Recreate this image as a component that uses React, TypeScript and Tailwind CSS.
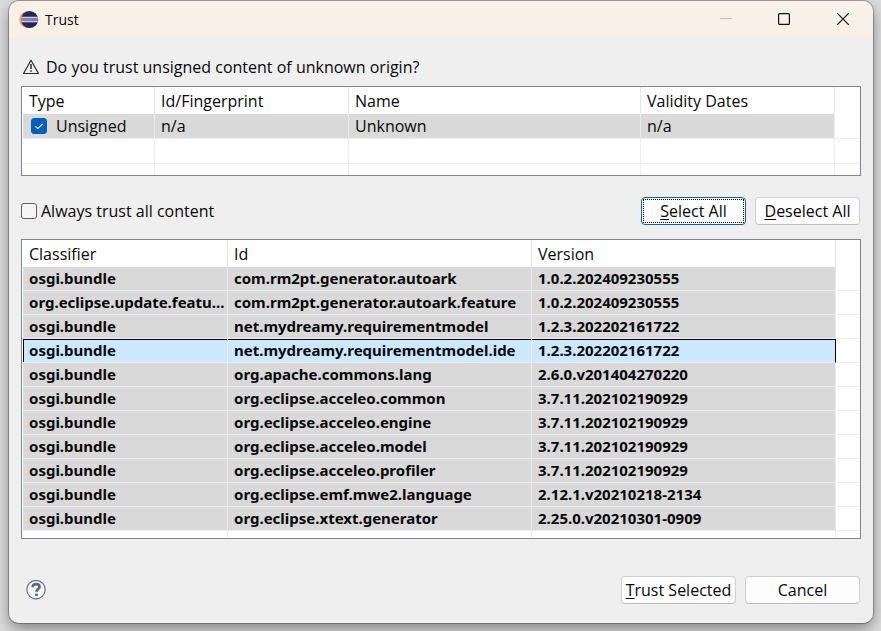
import { useState } from "react";
import type { ReactNode } from "react";

const bundles = [
  ["osgi.bundle", "com.rm2pt.generator.autoark", "1.0.2.202409230555"],
  ["org.eclipse.update.featu...", "com.rm2pt.generator.autoark.feature", "1.0.2.202409230555"],
  ["osgi.bundle", "net.mydreamy.requirementmodel", "1.2.3.202202161722"],
  ["osgi.bundle", "net.mydreamy.requirementmodel.ide", "1.2.3.202202161722"],
  ["osgi.bundle", "org.apache.commons.lang", "2.6.0.v201404270220"],
  ["osgi.bundle", "org.eclipse.acceleo.common", "3.7.11.202102190929"],
  ["osgi.bundle", "org.eclipse.acceleo.engine", "3.7.11.202102190929"],
  ["osgi.bundle", "org.eclipse.acceleo.model", "3.7.11.202102190929"],
  ["osgi.bundle", "org.eclipse.acceleo.profiler", "3.7.11.202102190929"],
  ["osgi.bundle", "org.eclipse.emf.mwe2.language", "2.12.1.v20210218-2134"],
  ["osgi.bundle", "org.eclipse.xtext.generator", "2.25.0.v20210301-0909"],
];

function EclipseLogo() {
  return (
    <svg className="size-5 shrink-0" viewBox="0 0 20 20" aria-hidden="true">
      <circle cx="8.8" cy="9.5" r="8.6" fill="#f2a65a" />
      <circle cx="10.6" cy="9.5" r="8.6" fill="#2f2358" />
      <path d="M2.2 7.5h16.6M2.2 11.5h16.6" stroke="#d2cce6" strokeWidth="1.4" />
      <path d="M2 9.5h17" stroke="#8f86b8" strokeWidth="2.4" />
    </svg>
  );
}

function WarningIcon() {
  return (
    <svg className="size-4 shrink-0" viewBox="0 0 16 16" fill="none" stroke="#2b2b2b" aria-hidden="true">
      <path d="M8 1.2 15.5 14.5H.5Z" strokeWidth="1.2" strokeLinejoin="round" />
      <path d="M8 5v5.1M8 11.3v1.5" strokeWidth="1.5" />
    </svg>
  );
}

function CheckBox({ id, checked, onChange, label }: { id: string; checked: boolean; onChange: () => void; label: string }) {
  return (
    <span className="relative inline-flex size-4 shrink-0">
      <input
        id={id}
        type="checkbox"
        aria-label={label}
        checked={checked}
        onChange={onChange}
        className="size-4 appearance-none rounded-[3px] border border-[#616161] bg-[#f5f5f5] checked:border-[#005fb8] checked:bg-[#005fb8]"
      />
      {checked && (
        <svg className="pointer-events-none absolute inset-0 size-4" viewBox="0 0 16 16" fill="none" stroke="#fff" aria-hidden="true">
          <path d="M4.3 8.3 6.8 10.6 11.7 5.8" strokeWidth="1.1" />
        </svg>
      )}
    </span>
  );
}

function PushButton({ children, className, focused }: { children: ReactNode; className: string; focused?: boolean }) {
  return (
    <button
      type="button"
      className={`flex h-7 items-center justify-center rounded border whitespace-nowrap ${
        focused ? "border-[#0067b0] bg-[#fdfdfd] p-px" : "border-[#d0d0d0] border-b-[#bcbcbc] bg-[#fdfdfd]"
      } ${className}`}
    >
      {focused ? (
        <span className="flex h-full w-full items-center justify-center border border-dotted border-black">
          <span>{children}</span>
        </span>
      ) : (
        <span>{children}</span>
      )}
    </button>
  );
}

const underline = "underline decoration-1 underline-offset-2";
const headCell = "h-[27px] border-r border-[#e5e5e5] px-1.5 pt-px text-left font-normal";
const greyCell = "border-r border-b border-[#ececf0] bg-[#d9d9d9] px-1.5";
const blankCell = "border-r border-b border-[#eeeef2]";
const lastCell = "border-r border-[#eeeef2]";

const selectedEdges = [
  "shadow-[inset_1px_1px_#000] border-r-[#ececf0]",
  "shadow-[inset_0_1px_#000] border-r-[#ececf0]",
  "shadow-[inset_0_1px_#000] border-r-black",
];

export default function App() {
  const [unsigned, setUnsigned] = useState(true);
  const [always, setAlways] = useState(false);
  const [selected, setSelected] = useState(3);

  return (
    <div className="min-h-screen overflow-hidden bg-[#dedede] pt-px pr-2 pb-2 pl-[9px] font-['Open_Sans','Noto_Sans',sans-serif] text-base leading-5 text-[#080808]">
      <main className="overflow-hidden rounded-[10px] shadow-[0_6px_16px_#0000006b,0_0_0_1px_#a4a4a4]">
        <header className="flex h-[37px] items-center bg-[#f9f1e8] pl-2.5">
          <EclipseLogo />
          <h1 className="ml-1.5 text-sm">Trust</h1>
          <div className="ml-auto flex h-full pb-0.5">
            <button type="button" aria-label="Minimize" disabled className="flex w-[58px] items-center justify-center">
              <svg className="size-3" viewBox="0 0 12 12" stroke="#c4beb4" aria-hidden="true"><path d="M0 5.5h12" /></svg>
            </button>
            <button type="button" aria-label="Maximize" className="flex w-[58px] items-center justify-center">
              <svg className="size-3" viewBox="0 0 12 12" fill="none" stroke="#111" strokeWidth="1.2" aria-hidden="true">
                <rect x=".6" y=".6" width="10.8" height="10.8" rx="1" />
              </svg>
            </button>
            <button type="button" aria-label="Close" className="flex w-[60px] items-center justify-center">
              <svg className="size-3" viewBox="0 0 12 12" stroke="#111" strokeWidth="1.2" aria-hidden="true">
                <path d="m0 0 12 12M12 0 0 12" />
              </svg>
            </button>
          </div>
        </header>

        <div className="bg-[#efefef] px-3 pt-[19px] pb-[19px]">
          <p className="flex items-center gap-[7px] pl-0.5">
            <WarningIcon />
            Do you trust unsigned content of unknown origin?
          </p>

          <div className="mt-[9px] h-[90px] overflow-hidden border border-[#82868f] bg-white pl-px">
            <table className="w-full table-fixed border-separate border-spacing-0">
              <colgroup>
                <col className="w-[132px]" />
                <col className="w-[194px]" />
                <col className="w-[292px]" />
                <col className="w-[194px]" />
                <col />
              </colgroup>
              <thead>
                <tr>
                  <th className={headCell}>Type</th>
                  <th className={headCell}>Id/Fingerprint</th>
                  <th className={headCell}>Name</th>
                  <th className={headCell}>Validity Dates</th>
                  <td />
                </tr>
              </thead>
              <tbody>
                <tr>
                  <td className="h-[25px] border-r border-b border-[#ececf0] bg-[#d9d9d9] px-2">
                    <label htmlFor="unsigned" className="flex items-center gap-[9px]">
                      <CheckBox id="unsigned" label="Unsigned" checked={unsigned} onChange={() => setUnsigned(!unsigned)} />
                      Unsigned
                    </label>
                  </td>
                  <td className={greyCell}>n/a</td>
                  <td className={greyCell}>Unknown</td>
                  <td className={greyCell}>n/a</td>
                  <td className="border-b border-[#eeeeee]" />
                </tr>
                <tr aria-hidden="true">
                  <td className={`h-[25px] ${blankCell}`} />
                  <td className={blankCell} />
                  <td className={blankCell} />
                  <td className={blankCell} />
                  <td className="border-b border-[#eeeef2]" />
                </tr>
                <tr aria-hidden="true">
                  <td className={`h-[11px] ${lastCell}`} />
                  <td className={lastCell} />
                  <td className={lastCell} />
                  <td className={lastCell} />
                  <td />
                </tr>
              </tbody>
            </table>
          </div>

          <div className="mt-[21px] flex items-center pr-px">
            <label htmlFor="always" className="flex items-center gap-1">
              <CheckBox id="always" label="Always trust all content" checked={always} onChange={() => setAlways(!always)} />
              Always trust all content
            </label>
            <div className="ml-auto flex gap-[9px]">
              <PushButton className="w-[105px]" focused>
                <span className={underline}>S</span>elect All
              </PushButton>
              <PushButton className="w-[105px]">
                <span className={underline}>D</span>eselect All
              </PushButton>
            </div>
          </div>

          <div className="mt-3.5 h-[300px] overflow-hidden border border-[#82868f] bg-white pl-px">
            <table className="w-full table-fixed border-separate border-spacing-0">
              <colgroup>
                <col className="w-[205px]" />
                <col className="w-[304px]" />
                <col className="w-[304px]" />
                <col />
              </colgroup>
              <thead>
                <tr>
                  <th className={headCell}>Classifier</th>
                  <th className={headCell}>Id</th>
                  <th className={headCell}>Version</th>
                  <td />
                </tr>
              </thead>
              <tbody className="font-['Noto_Sans','Open_Sans',sans-serif] text-[15px] font-bold">
                {bundles.map((cells, row) => (
                  <tr key={row} onClick={() => setSelected(row)}>
                    {cells.map((text, column) => (
                      <td
                        key={column}
                        className={`h-6 border-r border-b border-b-[#ececf0] pl-1.5 align-top leading-[22px] whitespace-nowrap ${
                          row === selected ? `bg-[#cce8ff] ${selectedEdges[column]}` : "border-r-[#ececf0] bg-[#d9d9d9]"
                        }`}
                      >
                        {text}
                      </td>
                    ))}
                    <td className="border-b border-[#eeeeee]" />
                  </tr>
                ))}
                <tr aria-hidden="true">
                  <td className={`h-[7px] ${lastCell}`} />
                  <td className={lastCell} />
                  <td className={lastCell} />
                  <td />
                </tr>
              </tbody>
            </table>
          </div>

          <div className="mt-[37px] flex items-center pr-px">
            <button type="button" aria-label="Help" className="ml-[5px] size-5">
              <svg className="size-5" viewBox="0 0 20 20" fill="none" stroke="#5a6a8a" aria-hidden="true">
                <circle cx="10" cy="9.7" r="9.2" fill="#f6f7f9" strokeWidth="1.1" />
                <path d="M6.6 7.3C6.6 5 8 4.1 10.1 4.1c2.1 0 3.4 1 3.4 2.8 0 2.3-3.1 2.3-3.1 4.9" strokeWidth="2.7" />
                <path d="M9.1 13.6h2.7v2.4H9.1z" fill="#5a6a8a" stroke="none" />
              </svg>
            </button>
            <div className="ml-auto flex gap-[9px]">
              <PushButton className="w-[115px]">
                <span className={underline}>T</span>rust Selected
              </PushButton>
              <PushButton className="w-[115px]">Cancel</PushButton>
            </div>
          </div>
        </div>
      </main>
    </div>
  );
}
